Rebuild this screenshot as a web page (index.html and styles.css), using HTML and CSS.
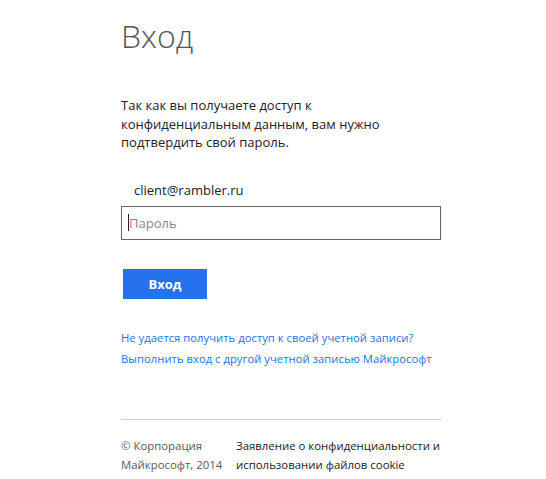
FILE: index.html
```html
<!DOCTYPE html>
<html lang="ru">
<head>
<meta charset="utf-8">
<title>Вход</title>
<link rel="stylesheet" href="styles.css">
</head>
<body>
<main class="page">
  <h1 class="title">Вход</h1>
  <p class="intro">Так как вы получаете доступ к конфиденциальным данным, вам нужно подтвердить свой пароль.</p>
  <div class="email">client@rambler.ru</div>
  <div class="field"><span class="caret"></span><span class="placeholder">Пароль</span></div>
  <button class="btn" type="button">Вход</button>
  <nav class="links">
    <a href="#" class="link">Не удается получить доступ к своей учетной записи?</a>
    <a href="#" class="link">Выполнить вход с другой учетной записью Майкрософт</a>
  </nav>
  <footer class="footer">
    <div class="copy">© Корпорация<br>Майкрософт, 2014</div>
    <a href="#" class="privacy">Заявление о конфиденциальности и<br>использовании файлов cookie</a>
  </footer>
</main>
</body>
</html>
```
FILE: styles.css
```css
html, body {
  margin: 0;
  padding: 0;
  background: #fff;
}
body {
  font-family: "Open Sans", "Noto Sans", sans-serif;
  color: #222;
}
.page {
  width: 320px;
  padding: 14px 0 0 121px;
}
.title {
  margin: 0;
  font-weight: 300;
  font-size: 32px;
  line-height: 44px;
  color: #555;
}
.intro {
  margin: 38px 0 0 0;
  font-size: 13px;
  line-height: 18.5px;
  color: #222;
}
.email {
  margin: 29px 0 0 13px;
  font-size: 13px;
  line-height: 18px;
}
.field {
  margin-top: 7px;
  box-sizing: border-box;
  height: 34px;
  border: 1px solid #666;
  display: flex;
  align-items: center;
  padding-left: 6px;
  font-size: 13px;
  color: #888;
}
.caret {
  width: 1px;
  height: 17px;
  background: #222;
}
.btn {
  display: block;
  margin: 29px 0 0 2px;
  width: 84px;
  height: 30px;
  border: 0;
  background: #2672ec;
  color: #fff;
  font-family: inherit;
  font-weight: 700;
  font-size: 13px;
}
.links {
  margin-top: 30px;
  display: flex;
  flex-direction: column;
  gap: 3px;
}
.link {
  color: #2672ec;
  text-decoration: none;
  font-size: 11.3px;
  line-height: 18px;
  white-space: nowrap;
}
.footer {
  margin-top: 51px;
  border-top: 1px solid #ccc;
  padding-top: 16px;
  display: flex;
  font-size: 11.4px;
  line-height: 19px;
}
.copy {
  flex: none;
  width: 115px;
  color: #5a5a5a;
}
.privacy {
  color: #222;
  text-decoration: none;
  white-space: nowrap;
}
```
